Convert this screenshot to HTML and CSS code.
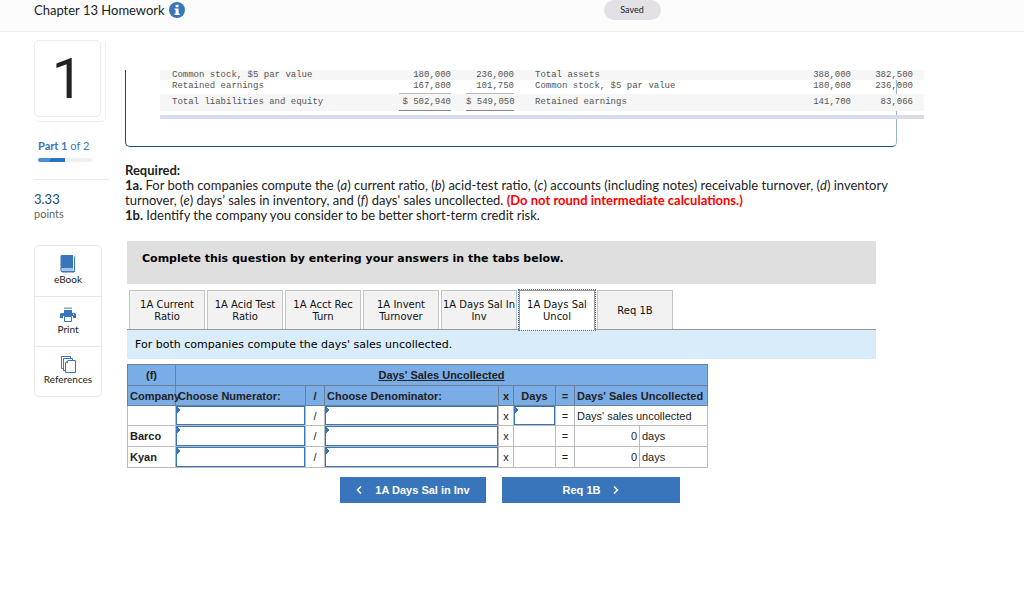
FILE: index.html
```html
<!DOCTYPE html>
<html lang="en">
<head>
<meta charset="utf-8">
<meta name="viewport" content="width=device-width, initial-scale=1">
<title>Chapter 13 Homework</title>
<link rel="stylesheet" href="styles.css">
</head>
<body>
<header class="topbar">
  <div class="topbar-title">
    <h1>Chapter 13 Homework</h1>
    <button class="info" type="button" aria-label="Assignment information">
      <svg viewBox="0 0 16 16" width="16" height="16"><circle cx="8" cy="8" r="8" fill="#3875ba"/><rect x="6.6" y="2.8" width="3" height="2.4" rx=".6" fill="#fff"/><path d="M5.6 6.4h4v5h1.2v1.5H5.4v-1.5h1.2V7.9h-1z" fill="#fff"/></svg>
    </button>
  </div>
  <span class="saved">Saved</span>
</header>

<div class="page">
  <aside class="side">
    <div class="card-stack"><div class="question-number">1</div></div>
    <div class="part"><b>Part 1</b> of 2</div>
    <div class="progress"><div class="progress-fill"></div></div>
    <div class="points"><div class="points-value">3.33</div><div class="points-label">points</div></div>
    <nav class="tools">
      <button type="button">
        <svg viewBox="0 0 16 18" width="16" height="18"><path d="M2 0h11v13H3.200C2 13 1.500 13.600 1.500 14.500S2 16 3 16h11v1.500H3C1.200 17.500.500 16.500.500 15V1.500C.500.600 1 0 2 0z" fill="#3875ba"/><path d="M3 13h10v3H3c-2 0-2-3 0-3z" fill="#a9c3e2"/><path d="M14.500 1.500V17" stroke="#3875ba"/></svg>
        <span>eBook</span>
      </button>
      <button type="button">
        <svg viewBox="0 0 16 16" width="16" height="16"><path d="M4 .5h8v1.500H4z" fill="#7da4d2"/><path d="M4 3h8v3h2.500A1.500 1.500 0 0 1 16 7.500V11h-3V9H3v2H0V7.500A1.500 1.500 0 0 1 1.500 6H4z" fill="#3875ba"/><path d="M4.500 9.500h7v5h-7z" fill="#fff" stroke="#3875ba"/><path d="M13 7.500h1" stroke="#fff"/></svg>
        <span>Print</span>
      </button>
      <button type="button">
        <svg viewBox="0 0 15 17" width="15" height="17" fill="#fff" stroke="#3875ba"><path d="M.5.5h9v12h-9z"/><path d="M2.500 2.500h9v12h-9z"/><path d="M7 4.500h7.500v12h-10V7z"/><path d="M4.500 7H7V4.500z" fill="#3875ba" stroke="none"/></svg>
        <span>References</span>
      </button>
    </nav>
  </aside>

  <main class="main">
    <section class="statement">
      <table class="balance">
        <colgroup><col class="b-label"><col class="b-num"><col class="b-num2"><col><col class="b-num3"><col class="b-num4"></colgroup>
        <tbody>
        <tr class="r1"><td>Common stock, $5 par value</td><td><span>180,000</span></td><td><span>236,000</span></td><td>Total assets</td><td>388,000</td><td>382,500</td></tr>
        <tr class="r2"><td>Retained earnings</td><td><span class="rule">167,800</span></td><td><span class="rule">101,750</span></td><td>Common stock, $5 par value</td><td>180,000</td><td>236,000</td></tr>
        <tr class="r3"><td>Total liabilities and equity</td><td><span class="total">$ 502,940</span></td><td><span class="total">$ 549,050</span></td><td>Retained earnings</td><td>141,700</td><td>83,066</td></tr>
        </tbody>
      </table>
    </section>

    <section class="required">
      <b>Required:</b><br>
      <b>1a.</b> For both companies compute the (<i>a</i>) current ratio, (<i>b</i>) acid-test ratio, (<i>c</i>) accounts (including notes) receivable turnover, (<i>d</i>) inventory turnover, (<i>e</i>) days’ sales in inventory, and (<i>f</i>) days' sales uncollected. <b class="warn">(Do not round intermediate calculations.)</b><br>
      <b>1b.</b> Identify the company you consider to be better short-term credit risk.
    </section>

    <section class="work">
      <div class="notice">Complete this question by entering your answers in the tabs below.</div>
      <div class="tabs" role="tablist">
        <button type="button" role="tab">1A Current Ratio</button>
        <button type="button" role="tab">1A Acid Test Ratio</button>
        <button type="button" role="tab">1A Acct Rec Turn</button>
        <button type="button" role="tab">1A Invent Turnover</button>
        <button type="button" role="tab">1A Days Sal In Inv</button>
        <button type="button" role="tab" class="active" aria-selected="true">1A Days Sal Uncol</button>
        <button type="button" role="tab">Req 1B</button>
      </div>
      <div class="prompt">For both companies compute the days' sales uncollected.</div>

      <table class="answers">
        <colgroup><col class="c-company"><col class="c-num"><col class="c-slash"><col class="c-den"><col class="c-x"><col class="c-days"><col class="c-eq"><col class="c-val"><col class="c-unit"></colgroup>
        <thead>
          <tr><th class="mid">(f)</th><th class="mid" colspan="8"><u>Days' Sales Uncollected</u></th></tr>
          <tr class="short"><th>Company</th><th>Choose Numerator:</th><th class="mid">/</th><th>Choose Denominator:</th><th class="mid">x</th><th class="mid">Days</th><th class="mid">=</th><th colspan="2">Days' Sales Uncollected</th></tr>
        </thead>
        <tbody>
          <tr class="short"><th></th><td class="entry"><input type="text" aria-label="Numerator"></td><td class="mid">/</td><td class="entry"><input type="text" aria-label="Denominator"></td><td class="mid">x</td><td class="entry"><input type="text" aria-label="Days"></td><td class="mid">=</td><td colspan="2">Days' sales uncollected</td></tr>
          <tr><th>Barco</th><td class="entry"><input type="text" aria-label="Barco numerator"></td><td class="mid">/</td><td class="entry"><input type="text" aria-label="Barco denominator"></td><td class="mid">x</td><td></td><td class="mid">=</td><td class="num">0</td><td>days</td></tr>
          <tr class="last"><th>Kyan</th><td class="entry"><input type="text" aria-label="Kyan numerator"></td><td class="mid">/</td><td class="entry"><input type="text" aria-label="Kyan denominator"></td><td class="mid">x</td><td></td><td class="mid">=</td><td class="num">0</td><td>days</td></tr>
        </tbody>
      </table>

      <div class="pager">
        <button type="button" class="prev"><svg viewBox="0 0 6 8" width="6" height="8"><path d="M5 .5L1.500 4 5 7.500" fill="none" stroke="#fff" stroke-width="1.500"/></svg>1A Days Sal in Inv</button>
        <button type="button" class="next">Req 1B<svg viewBox="0 0 6 8" width="6" height="8"><path d="M1 .5L4.500 4 1 7.500" fill="none" stroke="#fff" stroke-width="1.500"/></svg></button>
      </div>
    </section>
  </main>
</div>
</body>
</html>
```
FILE: styles.css
```css
* { box-sizing: border-box; }
body { margin: 0; background: #fff; color: #222; font: 13px/15px Lato, "Open Sans", sans-serif; }
button { font: inherit; color: inherit; margin: 0; padding: 0; border: 0; background: none; cursor: pointer; }
svg { display: block; flex: none; }

.topbar { display: grid; grid-template-columns: 1fr auto 1fr; height: 32px; padding: 0 0 0 34px; background: #fcfcfc; border-bottom: 1px solid #f0f0f0; align-items: start; }
.topbar-title { display: flex; align-items: center; gap: 4px; padding-top: 2px; }
h1 { margin: 0; font-size: 13px; line-height: 16px; font-weight: 400; }
.saved { grid-column: 2; margin-left: 206px; width: 57px; height: 20px; border-radius: 10px; background: #e3e1e5; font-size: 9px; line-height: 20px; text-align: center; }

.page { display: flex; gap: 16px; padding: 8px 34px 40px; }
.side { flex: none; width: 75px; }
.card-stack { display: flex; align-items: stretch; width: 72px; height: 82px; padding: 0 4px 4px 0; border: 1px solid #eee; border-top-color: transparent; border-left-color: transparent; border-radius: 5px; }
.question-number { flex: 1; margin: -1px 0 0 -1px; border: 1px solid #ececec; border-radius: 5px; background: #fff; text-align: center; font: 56px/76px Roboto, sans-serif; }
.part { margin: 16px 0 0 4px; font-size: 11px; line-height: 16px; color: #3875ba; }
.progress { width: 54px; height: 4px; margin: 4px 0 0 4px; border-radius: 2px; background: #f0f0f0; overflow: hidden; }
.progress-fill { width: 50%; height: 100%; background: linear-gradient(120deg, #4a90d9 45%, #2b74bd 46%); }
.points { margin-top: 17px; padding-top: 12px; border-top: 1px solid #ececec; }
.points-value { font-size: 13px; line-height: 15px; color: #174a86; }
.points-label { font-size: 11px; line-height: 14px; color: #666; }
.tools { width: 68px; margin-top: 24px; border: 1px solid #e8e8e8; border-radius: 5px; }
.tools button { display: flex; flex-direction: column; align-items: center; justify-content: center; width: 100%; height: 50px; padding-bottom: 2px; font-size: 10px; line-height: 12px; }
.tools button + button { border-top: 1px solid #e8e8e8; }

.main { flex: 1; min-width: 0; padding-top: 30px; max-width: 772px; }
.statement { height: 77px; padding-left: 34px; border: 1px solid #174a86; border-top: 0; border-right-color: #9ab3cf; border-radius: 0 0 5px 5px; }
.balance { width: calc(100% + 28px); table-layout: fixed; border-collapse: collapse; border-bottom: 4px solid #d7dce8; font: 9px/10px "Liberation Mono", monospace; color: #555; }
.balance td { padding: 0; vertical-align: top; white-space: nowrap; }
.balance td:first-child { padding-left: 12px; }
.balance td:nth-child(4) { padding-left: 21px; }
.balance td:nth-child(2), .balance td:nth-child(3), .balance td:nth-child(5), .balance td:nth-child(6) { text-align: right; }
.balance td:nth-child(3) { padding-left: 15px; }
.balance td:last-child { padding-right: 11px; }
.balance span { display: block; }
.r1, .r3 { background: #f6f6f6; }
.r1 td { height: 10px; }
.r2 td { height: 13px; line-height: 13px; }
.r3 td { height: 17px; line-height: 16px; }
.rule { border-bottom: 1px solid #bbb; }
.total { border-bottom: 1px solid #888; }
.balance tbody::after { content: ""; display: block; height: 4px; }
.b-label { width: 239px; }
.b-num { width: 52px; }
.b-num2 { width: 63px; }
.b-num3 { width: 60px; }
.b-num4 { width: 73px; }

.required { margin-top: 16px; }
.warn { color: #f00; }

.work { margin: 18px 21px 0 2px; }
.notice { height: 43px; padding: 11px 15px; background: #dfdfdf; color: #000; font: bold 11px/14px "DejaVu Sans", sans-serif; }
.tabs { display: flex; gap: 2px; padding: 6px 0 0 2px; border-bottom: 1px solid #999; font: 10px/12px "DejaVu Sans", sans-serif; color: #111; }
.tabs button { width: 76px; height: 39px; padding-top: 1px; background: #f2f2f2; border: 1px solid #c4c4c4; border-bottom: 0; white-space: normal; }
.tabs .active { height: 40px; margin-bottom: -1px; padding-top: 0; background: #fff; border-color: #999; outline: 1px dotted #3875ba; }
.prompt { padding: 8px 8px 7px; background: #d9ecfa; color: #000; font: 11px/14px "DejaVu Sans", sans-serif; }

.answers { width: 580px; max-width: 100%; margin-top: 5px; table-layout: fixed; border-collapse: collapse; font: 11px/14px "Liberation Sans", sans-serif; color: #222; }
.answers th, .answers td { height: 21px; padding: 0 2px; border: 1px solid #bbb; text-align: left; white-space: nowrap; }
.answers thead th { background: #7aace6; border-color: #6a7f99; }
.answers .short > * { height: 20px; }
.answers .mid { padding: 0; text-align: center; }
.answers .num { text-align: right; }
.answers .last > * { border-top-color: #777; }
.answers td.entry { padding: 0; }
.entry input { display: block; width: 100%; height: 20px; margin: 0; padding: 0 6px; border: 1px solid #3875ba; border-radius: 0; font: inherit; background: linear-gradient(to bottom left, transparent 50%, #3875ba 51%) 0 0 / 4px 3px no-repeat, linear-gradient(to top left, transparent 50%, #3875ba 51%) 0 3px / 4px 3px no-repeat, #fff; }
.short .entry input { height: 19px; }
.c-company { width: 48px; }
.c-num { width: 130px; }
.c-slash { width: 19px; }
.c-den { width: 174px; }
.c-x { width: 15px; }
.c-days { width: 42px; }
.c-eq { width: 19px; }
.c-val { width: 65px; }
.c-unit { width: 68px; }

.pager { display: flex; gap: 16px; margin: 9px 0 0 213px; font: bold 11px/14px "Liberation Sans", sans-serif; color: #fff; }
.pager button { display: flex; align-items: center; justify-content: center; gap: 13px; height: 26px; background: #3875ba; }
.prev { width: 146px; }
.next { width: 178px; }
```
